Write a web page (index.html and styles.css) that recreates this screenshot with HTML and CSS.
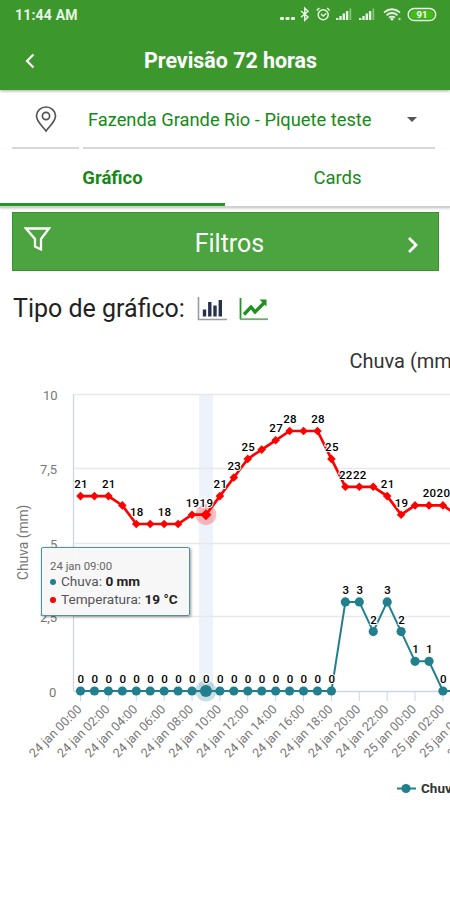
FILE: index.html
```html
<!DOCTYPE html>
<html lang="pt-BR">
<head>
    <meta charset="UTF-8">
    <meta name="viewport" content="width=device-width, initial-scale=1.0">
    <title>Previsão 72 horas</title>
    <link rel="stylesheet" href="styles.css">
</head>
<body>
    <header>
        <div class="status-bar">
            <span class="time">11:44 AM</span>
            <svg class="status-icons" width="160" height="18" viewBox="0 0 160 18">
                <g fill="#e6f5e1">
                    <rect x="3" y="12" width="4" height="3" rx="1"/>
                    <rect x="8.500" y="12" width="4" height="3" rx="1"/>
                    <rect x="14" y="12" width="4" height="3" rx="1"/>
                    <path d="M59 15v-2h2.400v2zM62.300 15v-4h2.400v4zM65.600 15v-6.500h2.400v6.500zM68.900 15v-9h2.400v9z"/>
                    <path d="M82 15v-2h2.400v2zM85.300 15v-4h2.400v4zM88.600 15v-6.500h2.400v6.500zM91.900 15v-9h2.400v9z"/>
                </g>
                <g fill="#8cc481">
                    <rect x="72.500" y="3.500" width="1.700" height="11.500"/>
                    <rect x="95.500" y="3.500" width="1.700" height="11.500"/>
                </g>
                <g fill="none" stroke="#e6f5e1" stroke-width="1.500">
                    <path d="M24 6l7 6-3.200 3.200V3.300l3.200 3-7 6"/>
                    <circle cx="46.200" cy="9.700" r="5"/>
                    <path d="M44 9l2.200 2 3-2.500M39.800 5.500l2.500-2.500M52.600 5.500l-2.500-2.500"/>
                    <path d="M107 7.500q8-6.500 16 0M109.500 10.200q5.500-4.400 11 0M112 12.800q3-2.400 6 0" stroke-width="1.800"/>
                    <rect x="131.200" y="3.500" width="27.500" height="12" rx="6"/>
                </g>
                <circle cx="115" cy="14.200" r="1.400" fill="#e6f5e1"/>
                <circle cx="122.500" cy="14" r="1.200" fill="#b9dfb0"/>
                <rect x="133.500" y="5.500" width="23" height="8" rx="3.500" fill="#42bd15"/>
                <text x="145" y="12.900" class="battery">91</text>
            </svg>
        </div>
        <div class="title-bar">
            <svg class="back" width="12" height="18" viewBox="0 0 12 18"><path d="M9.500 2.500L3 9l6.500 6.500"/></svg>
            <h1>Previsão 72 horas</h1>
        </div>
    </header>

    <div class="location">
        <div class="pin">
            <svg width="24" height="28" viewBox="0 0 24 28">
                <path d="M12 26C9.500 22 2.500 17 2.500 11a9.500 9 0 0 1 19 0c0 6-7 11-9.500 15z"/>
                <circle cx="12" cy="11" r="3.600"/>
            </svg>
        </div>
        <div class="select">
            <span>Fazenda Grande Rio - Piquete teste</span>
            <i class="caret"></i>
        </div>
    </div>

    <nav>
        <a href="#" class="active">Gráfico</a>
        <a href="#">Cards</a>
    </nav>

    <div class="filters">
        <svg width="28" height="28" viewBox="0 0 28 28"><path d="M2 2.500h23L17 13v10.500l-6-3V13z"/></svg>
        <span>Filtros</span>
        <svg class="next" width="14" height="20" viewBox="0 0 14 20"><path d="M3 3l7 7-7 7"/></svg>
    </div>

    <div class="chart-type">
        <span>Tipo de gráfico:</span>
        <svg width="30" height="26" viewBox="0 0 30 26">
            <path d="M1.500 1v22.500H30" fill="none" stroke="#999da3" stroke-width="1.600"/>
            <path d="M7.500 20.500v-7M12.800 20.500V6M18 20.500V9.500M23.300 20.500V4" fill="none" stroke="#25324f" stroke-width="3.400"/>
        </svg>
        <svg width="30" height="26" viewBox="0 0 30 26">
            <path d="M1.500 2v21" stroke="#268f25" stroke-width="1.800"/>
            <path d="M1 23.200h28" stroke="#6cae69" stroke-width="1.800"/>
            <path d="M5 18.500l7-7.500 4 5 9.500-9.500" fill="none" stroke="#1f8f20" stroke-width="3.300"/>
            <path d="M20.500 3.500h7v7z" fill="#1f8f20"/>
        </svg>
    </div>

    <div class="chart">
        <svg id="chart" width="450" height="470" viewBox="0 340 450 470"></svg>
        <div class="tooltip">
            <small>24 jan 09:00</small>
            <p><i class="dot rain"></i>Chuva: <b>0 mm</b></p>
            <p><i class="dot temp"></i>Temperatura: <b>19 °C</b></p>
        </div>
    </div>

    <script src="script.js"></script>
</body>
</html>
```
FILE: styles.css
```css
body {
    margin: 0;
    height: 900px;
    overflow: hidden;
    font-family: Roboto, sans-serif;
    background-color: #fff;
    color: #222;
}

header {
    position: relative;
    height: 90px;
    background-color: #3c982c;
    color: white;
    box-shadow: 0 1px 3px rgba(0, 0, 0, 0.35);
}

.status-bar {
    display: flex;
    justify-content: space-between;
    align-items: center;
    height: 30px;
    padding: 0 13px 0 15px;
}

.time {
    font-size: 14px;
    font-weight: bold;
    color: #e6f5e1;
    letter-spacing: 0.2px;
}

.status-icons {
    margin-top: -2px;
}

.battery {
    font-size: 9.5px;
    font-weight: bold;
    fill: white;
    text-anchor: middle;
}

.title-bar {
    display: flex;
    align-items: center;
    height: 60px;
}

.back {
    margin: 2px 0 0 24px;
    fill: none;
    stroke: white;
    stroke-width: 2.2;
}

h1 {
    flex: 1;
    margin: 0 15px 0 -10px;
    font-size: 21.4px;
    font-weight: bold;
    text-align: center;
}

.location {
    display: flex;
    gap: 4px;
    height: 59px;
    padding: 0 15px 0 12px;
    box-sizing: border-box;
}

.pin, .select {
    display: flex;
    align-items: center;
    box-sizing: border-box;
    border-bottom: 2px solid #d8d8d8;
}

.pin {
    width: 67px;
    justify-content: center;
}

.pin svg {
    fill: none;
    stroke: #555;
    stroke-width: 1.7;
}

.select {
    flex: 1;
    justify-content: space-between;
    padding: 2px 18px 0 5px;
    color: #168a16;
    font-size: 18.3px;
}

.caret {
    border: 5.5px solid transparent;
    border-top-color: #555;
    border-bottom: 0;
}

nav {
    display: flex;
    height: 57px;
    border-bottom: 2px solid #d2d2d2;
    box-shadow: 0 1px 2px rgba(0, 0, 0, 0.15);
}

nav a {
    flex: 1;
    line-height: 59px;
    text-align: center;
    text-decoration: none;
    color: #168a16;
    font-size: 18.5px;
}

nav .active {
    box-shadow: inset 0 -3px #249526;
    font-weight: bold;
}

.filters {
    display: flex;
    align-items: center;
    justify-content: space-between;
    height: 59px;
    margin: 4px 11px 0 12px;
    padding: 0 18px 0 11px;
    box-sizing: border-box;
    background-color: #4ba43f;
    border: 1px solid #38932b;
    color: white;
    font-size: 25px;
}

.filters span {
    padding: 3px 0 0 1px;
}

.filters svg {
    fill: none;
    stroke: white;
    stroke-width: 2.3;
    margin-bottom: 4px;
}

.filters .next {
    stroke-width: 2.8;
    margin: 7px 0 0;
}

.chart-type {
    display: flex;
    align-items: center;
    gap: 12px;
    height: 69px;
    padding: 6px 0 0 13px;
    box-sizing: border-box;
    font-size: 25px;
}

.chart {
    position: relative;
}

.chart svg {
    display: block;
}

.chart-title {
    font-size: 20px;
    fill: #333;
}

.axis {
    font-size: 13px;
    fill: #777;
}

.axis-title {
    font-size: 13.8px;
    fill: #777;
}

.x-label {
    font-size: 12.5px;
    fill: #777;
    text-anchor: end;
}

.label {
    font-size: 11.5px;
    font-weight: 500;
    letter-spacing: 0.3px;
    fill: #000;
    stroke: #fff;
    stroke-width: 2px;
    paint-order: stroke;
    text-anchor: middle;
}

.legend {
    font-size: 13.5px;
    font-weight: bold;
    fill: #333;
}

.tooltip {
    position: absolute;
    left: 41px;
    top: 207px;
    width: 149px;
    height: 69px;
    padding: 11px 0 0 8px;
    box-sizing: border-box;
    background-color: rgba(247, 247, 247, 0.95);
    border: 1.5px solid #4f929f;
    border-radius: 2px;
    box-shadow: 1px 1px 3px rgba(0, 0, 0, 0.4);
    color: #555;
    font-size: 13.6px;
    white-space: nowrap;
}

.tooltip b {
    color: #222;
}

.tooltip small {
    display: block;
    font-size: 11.4px;
    line-height: 14px;
    color: #666;
}

.tooltip p {
    margin: 0;
    line-height: 17.5px;
}

.dot {
    display: inline-block;
    width: 6px;
    height: 6px;
    margin: 0 5px 1px 0;
    border-radius: 50%;
}

.dot.rain {
    background-color: #22808e;
}

.dot.temp {
    background-color: #f00;
}
```
FILE: script.js
```js
const rain = [0,0,0,0,0,0,0,0,0,0,0,0,0,0,0,0,0,0,0,3,3,2,3,2,1,1,0,0];
const temp = [21,21,21,20,18,18,18,18,19,19,21,23,25,26,27,28,28,28,25,22,22,22,21,19,20,20,20,19];
// labels that would overlap their neighbours are hidden
const tempLabels = [0,2,4,6,8,9,10,11,12,14,15,17,18,19,20,22,23,25,26];
const selected = 9;

const x = i => 80.5 + i * 13.94;
const yRain = v => 691 - v * 29.7;
const yTemp = v => 524 - (v - 18) * 9.3;
const points = (data, y) => data.map((v, i) => `${x(i)},${y(v)}`).join(' ');
const diamond = (cx, cy, r) => `<path d="M${cx} ${cy - r}l${r} ${r}l${-r} ${r}l${-r} ${-r}z" fill="#f00"/>`;

let svg = `<text x="349.500" y="368" class="chart-title">Chuva (mm)</text>`;
svg += `<rect x="199" y="394" width="14" height="297" fill="#eef2fa"/>`;

// Grid and y axis
[['10', 43, 395], ['7,5', 40, 469], ['5', 50, 544], ['2,5', 40, 617], ['0', 49, 692]].forEach(([text, tx, y]) => {
    svg += `<path d="M73.500 ${y - 0.5}H450" stroke="${text === '0' ? '#ccd6eb' : '#e8e8ea'}" stroke-width="1.300"/>`;
    svg += `<text x="${tx}" y="${y + 5}" class="axis">${text}</text>`;
});
svg += `<path d="M73.500 394V691" stroke="#ccd6eb" stroke-width="1.300"/>`;
svg += `<text transform="translate(28 580) rotate(-90)" class="axis-title">Chuva (mm)</text>`;

// X axis
for (let i = 0; i < 32; i += 2) {
    const day = i < 24 ? 24 : 25;
    const hour = String(i % 24).padStart(2, '0');
    svg += `<path d="M${x(i)} 691v10" stroke="#ccd6eb"/>`;
    svg += `<text transform="translate(${x(i) + 2} 710) rotate(-45)" class="x-label">${day} jan ${hour}:00</text>`;
}

// Rain
svg += `<polyline points="${points(rain, yRain)}" fill="none" stroke="#22808e" stroke-width="2"/>`;
svg += `<circle cx="${x(selected)}" cy="691" r="10.500" fill="#22808e" opacity="0.250"/>`;
rain.forEach((v, i) => {
    svg += `<circle cx="${x(i)}" cy="${yRain(v)}" r="${i === selected ? 6 : 4.6}" fill="#22808e"/>`;
});

// Temperature
svg += `<polyline points="${points(temp, yTemp)}" fill="none" stroke="#f00" stroke-width="2.700"/>`;
svg += `<circle cx="${x(selected)}" cy="${yTemp(19)}" r="10.500" fill="#f00" opacity="0.250"/>`;
temp.forEach((v, i) => {
    svg += diamond(x(i), yTemp(v), i === selected ? 5.5 : 4.3);
});

// Data labels
rain.forEach((v, i) => {
    svg += `<text x="${x(i) + 0.5}" y="${yRain(v) - 8}" class="label">${v}</text>`;
});
tempLabels.forEach(i => {
    svg += `<text x="${x(i) + 0.5}" y="${yTemp(temp[i]) - 8}" class="label">${temp[i]}</text>`;
});

// Legend
svg += `<path d="M397 788.500h19" stroke="#22808e" stroke-width="2"/><circle cx="406" cy="788.500" r="4.600" fill="#22808e"/>`;
svg += `<text x="421" y="793" class="legend">Chuva</text>`;

document.getElementById('chart').innerHTML = svg;
```
